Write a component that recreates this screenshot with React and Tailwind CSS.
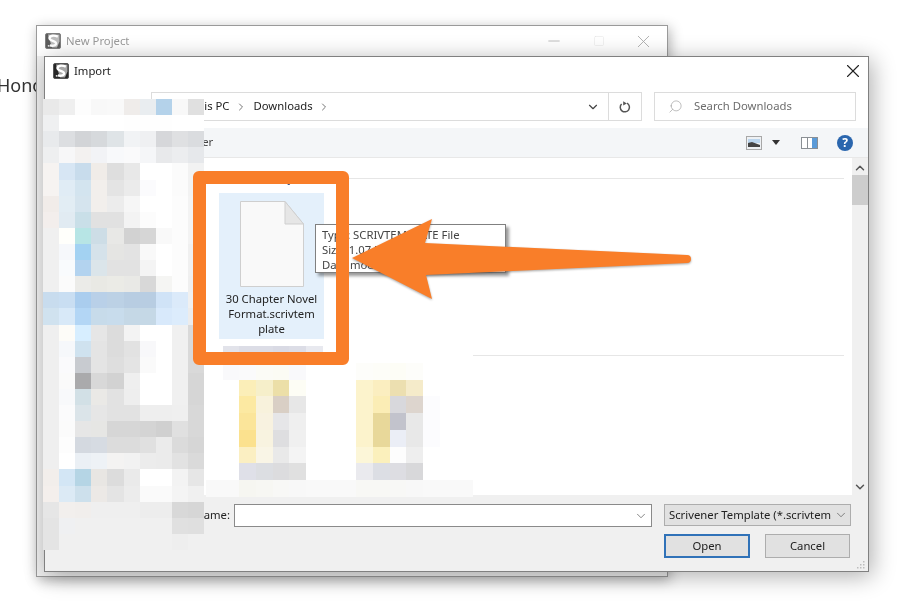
import React from "react";
import { ChevronDown, ChevronRight, ChevronUp, Search, X, Minus, Square } from "lucide-react";

// pixelated left nav, one row per 16px
const navMosaic = [
  ["#e9e9e9", "#efefef", "#fdfdfd", "#f8f8f8", "#f9f9f9", "#efecea", "#e9edf0", "#b4d2ea", "#f8f8f8", "#e0e0e0"],
  ["#eff0f1", "#fff", "#fff", "#fff", "#fff", "#fefefe", "#fefefe", "#fefefe", "#fff", "#fff"],
  ["#e8eaec", "#dcdee1", "#d2d4d7", "#d6d9dc", "#dfe4e7", "#f1f3f5", "#eff0f2", "#d6d7da", "#dfe0e2", "#dadcdf"],
  ["#eeeff0", "#f7f7f8", "#f3f1f0", "#f2f3f6", "#f8f9fb", "#fafafb", "#f5f6f8", "#e8e9eb", "#ecedef", "#e6e8eb"],
  ["#f6f3f1", "#d7e6f4", "#c8dcec", "#f0ece8", "#dedede", "#e8e8e8", "#fff", "#fff", "#fbfbfb", "#f2f2f2"],
  ["#f6f3f1", "#e0ecf5", "#d3e4ef", "#f2efec", "#e4e4e4", "#ebebeb", "#fbfbfd", "#fff", "#fbfbfb", "#f2f2f2"],
  ["#f1ece9", "#e2edf4", "#d5e4ee", "#f2efec", "#ececec", "#f6f6f6", "#fff", "#fff", "#fcfcfc", "#f3f3f3"],
  ["#f3eeec", "#e1ebf2", "#c9dfe8", "#e1e1e1", "#e1e1e1", "#f3f3f3", "#fcfcfc", "#fff", "#fcfcfc", "#f3f3f3"],
  ["#f0f0f0", "#fffffb", "#b7e5e5", "#cddde6", "#e8e8e6", "#d2d2d2", "#d6d6d6", "#f9f9f9", "#fcfcfc", "#f3f3f3"],
  ["#f0f0f0", "#f6f8fb", "#a3d2f2", "#d5e2ea", "#e5e5e3", "#e3e3e3", "#f9f9f9", "#fff", "#fcfcfc", "#f0f0f0"],
  ["#f0f0f0", "#f9fbfd", "#b3d3ef", "#dbe5ea", "#e2e2e2", "#e2e2e2", "#f4f4f4", "#fff", "#fcfcfc", "#f0f0f0"],
  ["#f0f0f0", "#fbfbfb", "#ebebe8", "#e9e9e4", "#ebebe6", "#e9e9e6", "#d8d8d8", "#f5f5f3", "#fcfcfc", "#efefef"],
  ["#c8dcee", "#c9def2", "#aacdee", "#b9d0e8", "#bcd1e5", "#b8cde2", "#b8cde2", "#d0e3f7", "#dbeafa", "#f0f0f0"],
  ["#d0e2ef", "#d8e9f8", "#b3d6f5", "#c7dbea", "#c8dcec", "#c5d8e6", "#c5d8e6", "#d8e9fb", "#dcecfc", "#ececec"],
  ["#efefef", "#fdfcf8", "#d7eeff", "#e6e6e6", "#dcdcdc", "#f3f3f3", "#fff", "#fff", "#f0f0f0", "#d9d9d9"],
  ["#efefef", "#f6f8fb", "#cfe2ef", "#e4e4e4", "#dcdcdc", "#e2e2e2", "#f8f8fa", "#fff", "#f0f0f0", "#d9d9d9"],
  ["#efefef", "#fafafc", "#c8cbd0", "#e4e4e4", "#dedede", "#e4e4e4", "#fafafa", "#fff", "#f0f0f0", "#d9d9d9"],
  ["#efefef", "#fafafa", "#aaaaac", "#d8d8d8", "#d2d2d2", "#efefef", "#fff", "#fff", "#f0f0f0", "#d6d6d6"],
  ["#efefef", "#f8f9fb", "#d2e0e6", "#eae9e6", "#e2e2e2", "#eeeeee", "#fff", "#fff", "#f0f0f0", "#d6d6d6"],
  ["#efefef", "#fbfbfc", "#dbe4e9", "#e6e6e6", "#e2e2e2", "#e2e2e2", "#eeeeee", "#eeeeee", "#efefef", "#d8d8d8"],
  ["#efefef", "#fbfbfb", "#e6e6e6", "#e6e6e4", "#d6d6d6", "#d6d6d6", "#d4d4d4", "#d0d0d0", "#e0e0e0", "#d8d8d8"],
  ["#efefef", "#fdfdfd", "#d4d9e0", "#d6dbe2", "#dcdcdc", "#dcdcdc", "#e0e0e0", "#ebebeb", "#dbdbdb", "#d6d6d6"],
  ["#efefef", "#fff", "#ebf0f5", "#eef2f6", "#f4f3f2", "#f2f2f2", "#ececec", "#ebebeb", "#e2e2e2", "#dadada"],
  ["#f2eeeb", "#d3e6f5", "#b5d5e5", "#e8e6e3", "#dcdcdc", "#eaeaea", "#fff", "#fff", "#f3f3f3", "#e6e6e6"],
  ["#f4efec", "#dceaf5", "#cde0ec", "#ece9e6", "#e4e4e4", "#ececec", "#fafafa", "#fafafa", "#f4f4f4", "#f0f0f0"],
  ["#e6e6e6", "#f2efed", "#f1eeec", "#efefef", "#efefef", "#efefef", "#ededed", "#ededed", "#d8d8d8", "#d6d6d6"],
  ["#e4e4e4", "#eff0f2", "#f0f0f0", "#f0f0f0", "#f0f0f0", "#f0f0f0", "#f0f0f0", "#f0f0f0", "#e0e0e0", "#dfdfdf"],
  ["#e4e4e4", "#f0f0f0", "#f0f0f0", "#f0f0f0", "#f0f0f0", "#f0f0f0", "#f0f0f0", "#f0f0f0", "#eeeeee", "#f0f0f0"],
];

const w = "#fff";
// pixelated second file group
const filesMosaic = [
  [w, "#e2e3ea", "#dcdde6", "#dcdde6", "#d9dae4", "#dcdde6", "#e8e9ef", w, w, w, w, w, w, w, w, w],
  [w, "#f9f9fb", "#fafafb", "#fbfbf6", "#fbfbf4", "#f9f9fb", w, w, w, "#fdfdfa", "#fdfdf8", "#fdfdf6", "#fdfdfa", w, w, w],
  [w, w, "#fbeeb8", "#f6efca", "#ecdfa8", "#fdfdf5", w, w, w, "#fcf3cc", "#fbeec0", "#ecdfb0", "#f5ebca", w, w, w],
  [w, w, "#fce9a2", "#f8f2dc", "#d9cfc5", "#e7e7e7", w, w, w, "#fcf3cc", "#fbedb5", "#d8d8dc", "#ddd5ce", "#fcfcfe", w, w],
  [w, w, "#fbe59a", "#f8f2e0", "#e6e6e8", "#efefef", w, w, w, "#fcf3cc", "#e8d89a", "#c2c3cc", "#e8e8e8", "#fcfcfe", w, w],
  [w, w, "#fbe18e", "#f8f3e0", "#dedee0", "#f0f0f0", w, w, w, "#fcf3cc", "#e8d89a", "#ebeef6", "#e8e8e8", "#fcfcfe", w, w],
  [w, w, "#fbefc2", "#f9f5e6", "#e9e9e9", "#f4f4f4", w, w, w, "#fcf6d8", "#fbf0bc", "#fdfdfd", "#eeeeee", w, w, w],
  [w, w, "#dfe0e8", "#dcdee2", "#dcdcde", "#e0e0e0", w, w, w, "#eaeaee", "#dcdee4", "#dddde2", "#d8d8da", w, w, w],
  ["#f9f9f9", "#f9f9f9", "#f6f6f1", "#f7f7f3", "#f8f8f6", "#f8f8f8", "#f9f9f9", "#f9f9f9", "#f9f9f9", "#f8f8f5", "#f8f8f5", "#f8f8f6", "#f8f8f8", "#f9f9f9", "#f9f9f9", "#f9f9f9"],
];

const ScrivenerLogo = ({ faded }) => (
  <svg viewBox="0 0 16 16" className={`w-4 h-4 shrink-0 ${faded ? "opacity-75" : ""}`}>
    <rect x="0.5" y="0.5" width="15" height="15" rx="1.5" fill="#262626" stroke="#555" />
    <path d="M3 1.5h11.5v7L12 14.5H7z" fill="#a8a8a8" />
    <path d="M12.8 3.6C9 2 4.8 2.4 4.5 5c-.3 2.8 6.2 2.6 6.6 5.2.3 2-2.8 3-6.3 2.2" fill="none" stroke="#fff" strokeWidth="2.4" />
    <circle cx="3.6" cy="12.8" r="0.9" fill="#e5e5e5" />
  </svg>
);

const Mosaic = ({ rows, className }) => (
  <div className={className}>
    {rows.flat().map((color, i) => (
      <div key={i} style={{ backgroundColor: color }} />
    ))}
  </div>
);

const App = () => {
  return (
    <div className="relative w-[903px] h-[611px] overflow-hidden bg-white blur-[0.35px] text-[11.3px] text-[#222] font-['Noto_Sans','Open_Sans',sans-serif]">
      <span className="absolute left-[-3px] top-[72px] text-[18px] text-[#333]">Honor</span>

      {/* New Project window, behind */}
      <div className="absolute left-[36px] top-[25px] w-[632px] h-[552px] bg-[#f0f0f0] border border-[#9a9a9a] shadow-[2px_3px_12px_rgba(0,0,0,0.3)]">
        <div className="flex items-center h-[30px] pl-[8px] bg-white text-[#9b9b9b]">
          <ScrivenerLogo faded />
          <span className="ml-[5px]">New Project</span>
          <div className="ml-auto flex items-center pr-[13px] text-[#a8a8a8]">
            <Minus className="w-[18px] h-[18px]" strokeWidth={1} />
            <Square className="ml-[30px] w-3 h-3 text-[#e2e2e2]" strokeWidth={1} />
            <X className="ml-[28px] w-[21px] h-[21px]" strokeWidth={1} />
          </div>
        </div>
      </div>

      {/* Import dialog */}
      <div className="absolute left-[44px] top-[56px] w-[825px] h-[516px] flex flex-col bg-[#f0f0f0] border border-[#808080] shadow-[3px_4px_22px_rgba(0,0,0,0.32)]">
        <div className="bg-white h-[71px] shrink-0">
          <div className="flex items-center h-[28px] pl-[8px]">
            <ScrivenerLogo />
            <span className="ml-[5px]">Import</span>
            <X className="ml-auto mr-[4px] w-[22px] h-[22px] text-[#222]" strokeWidth={1.2} />
          </div>
          <div className="flex mt-[7px] pl-[106px] pr-[12px]">
            <div className="w-[491px] h-[29px] flex items-center border border-[#dcdcdc]">
              <svg viewBox="0 0 16 16" className="ml-[5px] w-4 h-4">
                <path d="M1 3h5l1 2h8v10H1z" fill="#a9cdec" />
              </svg>
              <span className="ml-[18px]">This PC</span>
              <ChevronRight className="ml-[5px] w-3 h-3 text-[#777]" strokeWidth={2} />
              <span className="ml-[7px]">Downloads</span>
              <ChevronRight className="ml-[5px] w-3 h-3 text-[#777]" strokeWidth={2} />
              <div className="ml-auto flex items-center h-full">
                <ChevronDown className="w-[14px] h-[14px] mr-[8px] text-[#444]" strokeWidth={2} />
                <div className="w-[33px] h-full flex items-center justify-center border-l border-[#dcdcdc]">
                  <svg viewBox="0 0 14 14" className="w-[14px] h-[14px]" fill="none" stroke="#555" strokeWidth="1.5">
                    <path d="M9 3.2A4.6 4.6 0 1 1 3.6 4" />
                    <path d="M5.2 1.2v4.4L8.8 3.4z" fill="#555" stroke="none" />
                  </svg>
                </div>
              </div>
            </div>
            <div className="ml-[12px] w-[202px] h-[29px] flex items-center border border-[#dcdcdc] text-[#6d6d6d]">
              <Search className="ml-[13px] w-[15px] h-[15px] -scale-x-100 text-[#999]" strokeWidth={1} />
              <span className="ml-[11px]">Search Downloads</span>
            </div>
          </div>
        </div>

        <div className="h-[30px] shrink-0 flex items-center pl-[110px] pr-[15px] bg-[#f4f6f8] border-b border-[#e8e8e8] text-[#444]">
          <span>New folder</span>
          <div className="ml-auto flex items-center">
            <svg viewBox="0 0 16 14" className="w-[16px] h-[14px]">
              <rect x="0.5" y="0.5" width="15" height="13" fill="#eef1f4" stroke="#a8a8a8" />
              <path d="M2 3h12v4H2z" fill="#bcd6ee" />
              <path d="M2 7l4-1 8 3v2H2z" fill="#444" />
            </svg>
            <svg viewBox="0 0 8 5" className="ml-[10px] w-[8px] h-[5px]">
              <path d="M0 0h8L4 5z" fill="#333" />
            </svg>
            <svg viewBox="0 0 17 12" className="ml-[21px] w-[17px] h-[12px]">
              <rect x="0.5" y="0.5" width="16" height="11" fill="#fff" stroke="#8a8f94" />
              <rect x="11" y="1" width="5" height="10" fill="#5b9bd8" />
              <rect x="6" y="1" width="1" height="10" fill="#8a8f94" />
            </svg>
            <div className="ml-[19px] w-[16px] h-[16px] rounded-full bg-[#2a66ae] flex items-center justify-center text-white text-[12px] font-bold leading-none">
              ?
            </div>
          </div>
        </div>

        <div className="flex-1 min-h-0 flex bg-white">
          <div className="w-[159px] shrink-0" />
          <div className="flex-1 min-w-0 pr-[8px]">
            <div className="h-[35px] flex items-start pt-[14px] pl-[58px] text-[#1e3a6e]">
              <span className="leading-none">Today (1)</span>
              <div className="ml-[4px] mt-[6px] flex-1 h-px bg-[#e6e6e6]" />
            </div>
            <div className="ml-[15px] w-[105px] h-[146px] bg-[#e4f0fb] flex flex-col items-center pt-[8px]">
              <svg viewBox="0 0 64 86" className="w-[64px] h-[86px]">
                <path d="M.5.5H45L63.5 23V85.5H.5z" fill="#f9f9f9" stroke="#cfcfcf" />
                <path d="M45 .5V23H63.5z" fill="#e6e6e6" stroke="#cfcfcf" />
              </svg>
              <div className="mt-[4px] text-center leading-[15px]">
                30 Chapter Novel
                <br />
                Format.scrivtem
                <br />
                plate
              </div>
            </div>
            <div className="mt-[16px] h-px bg-[#e6e6e6]" />
          </div>
          <div className="w-[16px] shrink-0 flex flex-col items-center bg-[#f0f0f0] text-[#555]">
            <ChevronUp className="mt-[3px] w-[14px] h-[14px]" strokeWidth={2.5} />
            <div className="w-full h-[30px] bg-[#cdcdcd]" />
            <ChevronDown className="mt-auto mb-[1px] w-[14px] h-[14px]" strokeWidth={2.5} />
          </div>
        </div>

        <div className="h-[76px] shrink-0 flex relative">
          <div className="w-[185px] shrink-0 pt-[12px] text-right">File name:</div>
          <div className="ml-[4px] w-[418px] pt-[9px]">
            <div className="h-[23px] flex items-center justify-end pr-[3px] bg-white border border-[#8a8a8a]">
              <ChevronDown className="w-[14px] h-[14px] text-[#555]" strokeWidth={1.2} />
            </div>
          </div>
          <div className="ml-[12px] w-[187px] pt-[9px]">
            <div className="h-[22px] flex items-center pl-[4px] pr-[2px] bg-[#e1e1e1] border border-[#adadad] overflow-hidden">
              <span className="w-[162px] overflow-hidden whitespace-nowrap">Scrivener Template (*.scrivtemplate)</span>
              <ChevronDown className="ml-auto w-[14px] h-[14px] text-[#555]" strokeWidth={1.2} />
            </div>
            <div className="flex mt-[8px] gap-[15px] w-[186px]">
              <button className="w-[86px] h-[24px] bg-[#e1e1e1] border-2 border-[#3072b8] leading-none">Open</button>
              <button className="w-[85px] h-[24px] bg-[#e1e1e1] border border-[#adadad] leading-none">Cancel</button>
            </div>
          </div>
          <svg viewBox="0 0 8 8" className="absolute right-[3px] bottom-[2px] w-[8px] h-[8px]">
            <path d="M6 0h1.5v1.5H6zM3 3h1.5v1.5H3zM6 3h1.5v1.5H6zM0 6h1.5v1.5H0zM3 6h1.5v1.5H3zM6 6h1.5v1.5H6z" fill="#bdbdbd" />
          </svg>
        </div>
      </div>

      {/* pixelated parts laid over the dialog */}
      <Mosaic rows={navMosaic} className="absolute left-[43px] top-[99px] w-[161px] h-[451px] grid grid-cols-10 grid-rows-[repeat(28,1fr)]" />
      <Mosaic rows={filesMosaic} className="absolute left-[206px] top-[346px] w-[267px] h-[151px] grid grid-cols-[repeat(16,1fr)] grid-rows-9" />

      {/* hover tooltip */}
      <div className="absolute left-[315px] top-[224px] w-[191px] h-[49px] pl-[6px] pt-[2px] bg-white border border-[#808080] shadow-[3px_3px_3px_rgba(0,0,0,0.4)] leading-[15px] text-[#444] whitespace-nowrap">
        <div>Type: SCRIVTEMPLATE File</div>
        <div>Size: 1.07 MB</div>
        <div>Date modified: today</div>
      </div>

      {/* orange callout */}
      <div className="absolute left-[193px] top-[171px] w-[156px] h-[194px] border-[13px] border-[#f97e29] rounded-[6px]" />
      <svg viewBox="0 0 903 611" className="absolute inset-0 w-[903px] h-[611px] drop-shadow-[0_1px_1px_rgba(0,0,0,0.35)]">
        <path
          d="M352 258L432 219L425 243L687 255A4 4 0 0 1 687 263L426 275L432 299Z"
          fill="#f97e29"
        />
      </svg>
    </div>
  );
};

export default App;
